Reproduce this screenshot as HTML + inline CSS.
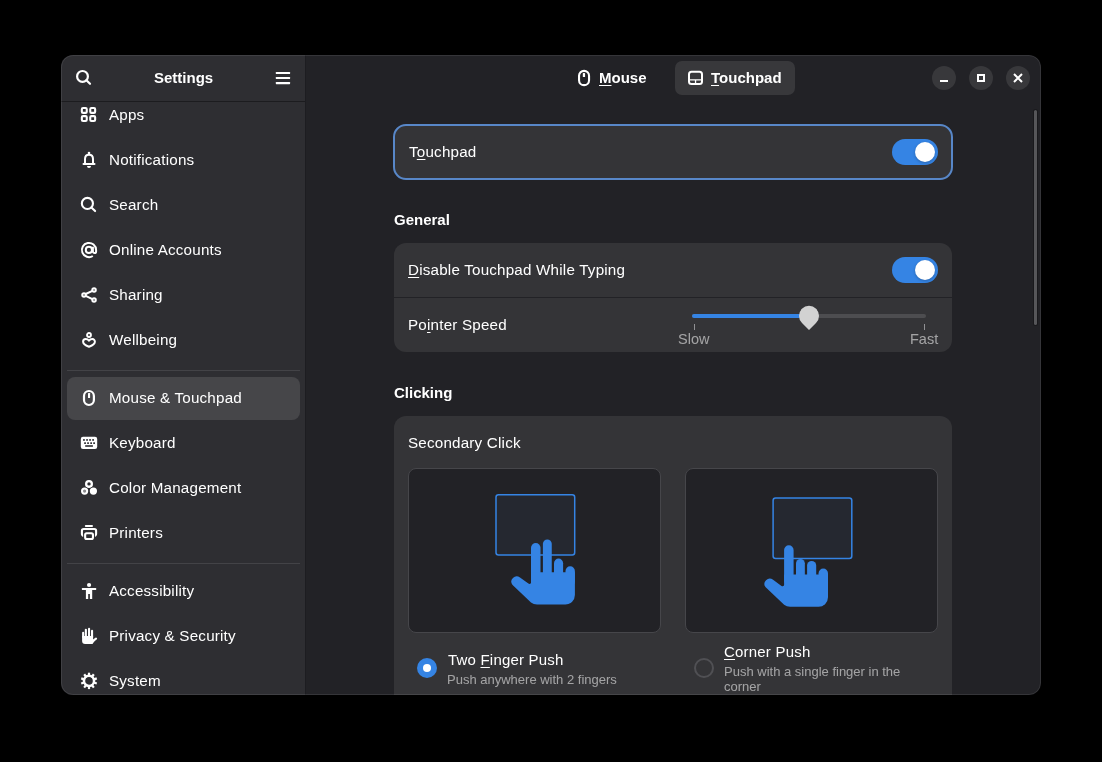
<!DOCTYPE html>
<html><head><meta charset="utf-8">
<style>
*{margin:0;padding:0;box-sizing:border-box}
html,body{width:1102px;height:762px;background:#000;overflow:hidden;font-family:"Liberation Sans",sans-serif;color:#fff}
.abs{position:absolute}
.t{position:absolute;white-space:nowrap;will-change:transform;letter-spacing:0.2px}
.b{letter-spacing:0}
.dim{letter-spacing:0}
.b{font-weight:bold}
.dim{color:rgba(255,255,255,0.55)}
.u{text-decoration:underline;text-decoration-thickness:1px;text-underline-offset:2px}
.card{position:absolute;background:#343437;border-radius:12px}
svg{position:absolute;overflow:visible}
#win{position:absolute;left:0;top:0;width:1102px;height:762px;background:#222226;clip-path:inset(55px 61px 67px 61px round 12px)}
</style></head>
<body>
<div id="win">
<div class="abs" style="left:61px;top:55px;width:244px;height:640px;background:#2e2e32"></div>
<div class="abs" style="left:305px;top:55px;width:1px;height:640px;background:#1d1d21"></div>
<div class="abs" style="left:61px;top:101px;width:244px;height:1px;background:#1c1c1f"></div>
<div class="abs" style="left:67px;top:377px;width:233px;height:43px;border-radius:8px;background:#464649"></div>
<div class="abs" style="left:67px;top:370px;width:233px;height:1px;background:#434347"></div>
<div class="abs" style="left:67px;top:563px;width:233px;height:1px;background:#434347"></div>
<div class="t " style="left:109px;top:104.73px;font-size:15.2px;line-height:20px;letter-spacing:0.2px">Apps</div>
<div class="t " style="left:109px;top:149.73px;font-size:15.2px;line-height:20px;letter-spacing:0.2px">Notifications</div>
<div class="t " style="left:109px;top:194.73px;font-size:15.2px;line-height:20px;letter-spacing:0.2px">Search</div>
<div class="t " style="left:109px;top:239.73px;font-size:15.2px;line-height:20px;letter-spacing:0.2px">Online Accounts</div>
<div class="t " style="left:109px;top:284.73px;font-size:15.2px;line-height:20px;letter-spacing:0.2px">Sharing</div>
<div class="t " style="left:109px;top:329.73px;font-size:15.2px;line-height:20px;letter-spacing:0.2px">Wellbeing</div>
<div class="t " style="left:109px;top:388.03px;font-size:15.2px;line-height:20px;letter-spacing:0.2px">Mouse &amp; Touchpad</div>
<div class="t " style="left:109px;top:433.03px;font-size:15.2px;line-height:20px;letter-spacing:0.2px">Keyboard</div>
<div class="t " style="left:109px;top:478.03px;font-size:15.2px;line-height:20px;letter-spacing:0.2px">Color Management</div>
<div class="t " style="left:109px;top:523.03px;font-size:15.2px;line-height:20px;letter-spacing:0.2px">Printers</div>
<div class="t " style="left:109px;top:581.03px;font-size:15.2px;line-height:20px;letter-spacing:0.2px">Accessibility</div>
<div class="t " style="left:109px;top:626.23px;font-size:15.2px;line-height:20px;letter-spacing:0.2px">Privacy &amp; Security</div>
<div class="t " style="left:109px;top:671.33px;font-size:15.2px;line-height:20px;letter-spacing:0.2px">System</div>
<div class="t b" style="left:153.5px;top:67.60px;font-size:15px;line-height:20px;">Settings</div>
<div class="abs" style="left:675px;top:61px;width:120px;height:34px;border-radius:7px;background:#38383b"></div>
<div class="t b" style="left:598.5px;top:68.10px;font-size:15px;line-height:20px;"><span class="u">M</span>ouse</div>
<div class="t b" style="left:710.5px;top:68.10px;font-size:15px;line-height:20px;"><span class="u">T</span>ouchpad</div>
<div class="abs" style="left:932px;top:66px;width:24px;height:24px;border-radius:12px;background:#38383b"></div>
<div class="abs" style="left:969px;top:66px;width:24px;height:24px;border-radius:12px;background:#38383b"></div>
<div class="abs" style="left:1006px;top:66px;width:24px;height:24px;border-radius:12px;background:#38383b"></div>
<div class="abs" style="left:1034px;top:110px;width:3px;height:215px;border-radius:2px;background:#565659;box-shadow:0 0 0 1px rgba(0,0,0,0.25)"></div>
<div class="card" style="left:394px;top:125px;width:558px;height:54px;"></div>
<div class="abs" style="left:393px;top:124px;width:560px;height:56px;border-radius:13px;border:2px solid #5887c8"></div>
<div class="t " style="left:409px;top:141.73px;font-size:15.2px;line-height:20px;">T<span class="u">o</span>uchpad</div>
<div class="abs" style="left:892px;top:139px;width:46px;height:26px;border-radius:13px;background:#3584e4"></div>
<div class="abs" style="left:915px;top:142px;width:20px;height:20px;border-radius:10px;background:#fff;box-shadow:0 1px 3px rgba(0,0,0,0.25)"></div>
<div class="t b" style="left:394.4px;top:209.60px;font-size:15px;line-height:20px;">General</div>
<div class="card" style="left:394px;top:243px;width:558px;height:109px;"></div>
<div class="abs" style="left:394px;top:297px;width:558px;height:1px;background:#222226"></div>
<div class="t " style="left:408px;top:260.43px;font-size:15.2px;line-height:20px;"><span class="u">D</span>isable Touchpad While Typing</div>
<div class="abs" style="left:892px;top:257px;width:46px;height:26px;border-radius:13px;background:#3584e4"></div>
<div class="abs" style="left:915px;top:260px;width:20px;height:20px;border-radius:10px;background:#fff;box-shadow:0 1px 3px rgba(0,0,0,0.25)"></div>
<div class="t " style="left:408px;top:315.13px;font-size:15.2px;line-height:20px;">Po<span class="u">i</span>nter Speed</div>
<div class="abs" style="left:692px;top:314px;width:234px;height:4px;border-radius:2px;background:#4d4d50"></div>
<div class="abs" style="left:692px;top:314px;width:117px;height:4px;border-radius:2px;background:#3584e4"></div>
<div class="abs" style="left:694px;top:324px;width:1px;height:6px;background:#909093"></div>
<div class="abs" style="left:924px;top:324px;width:1px;height:6px;background:#909093"></div>
<svg style="left:0;top:0" width="1102" height="762"><path d="M809 330 L802 323 A10 10 0 1 1 816 323 Z" fill="#d2d2d2"/></svg>
<div class="t dim" style="left:677.5px;top:328.58px;font-size:14.5px;line-height:20px;">Slow</div>
<div class="t dim" style="left:909.8px;top:328.78px;font-size:14.5px;line-height:20px;">Fast</div>
<div class="t b" style="left:394.4px;top:382.50px;font-size:15px;line-height:20px;">Clicking</div>
<div class="card" style="left:394px;top:416px;width:558px;height:320px;"></div>
<div class="t " style="left:408.4px;top:433.33px;font-size:15.2px;line-height:20px;">Secondary Click</div>
<div class="abs" style="left:408px;top:468px;width:253px;height:165px;border-radius:8px;background:#222226;border:1px solid #46464a"></div>
<div class="abs" style="left:685px;top:468px;width:253px;height:165px;border-radius:8px;background:#222226;border:1px solid #46464a"></div>
<div class="abs" style="left:417px;top:658px;width:20px;height:20px;border-radius:10px;background:#3584e4"></div>
<div class="abs" style="left:423px;top:664px;width:8px;height:8px;border-radius:4px;background:#fff"></div>
<div class="abs" style="left:694px;top:658px;width:20px;height:20px;border-radius:10px;border:2px solid #505054"></div>
<div class="t " style="left:447.9px;top:649.50px;font-size:15.0px;line-height:20px;">Two <span class="u">F</span>inger Push</div>
<div class="t dim" style="left:447px;top:671.50px;font-size:13px;line-height:16px;">Push anywhere with 2 fingers</div>
<div class="t " style="left:723.8px;top:642.10px;font-size:15.0px;line-height:20px;"><span class="u">C</span>orner Push</div>
<div class="t dim" style="left:724px;top:664.40px;font-size:13px;line-height:16px;">Push with a single finger in the</div>
<div class="t dim" style="left:724px;top:678.90px;font-size:13px;line-height:16px;">corner</div>
<svg style="left:80px;top:106px" width="16" height="16" viewBox="0 0 16 16"><g transform="translate(0.50 0.50)"><rect x="1.35" y="1.48" width="4.9" height="4.9" rx="1.2" fill="none" stroke="#fff" stroke-width="2.1"/><rect x="1.35" y="9.65" width="4.9" height="4.9" rx="1.2" fill="none" stroke="#fff" stroke-width="2.1"/><rect x="9.75" y="1.48" width="4.9" height="4.9" rx="1.2" fill="none" stroke="#fff" stroke-width="2.1"/><rect x="9.75" y="9.65" width="4.9" height="4.9" rx="1.2" fill="none" stroke="#fff" stroke-width="2.1"/></g></svg>
<svg style="left:80px;top:151px" width="16" height="16" viewBox="0 0 16 16"><g transform="translate(0.50 0.50)"><circle cx="8.5" cy="1.6" r="1.3" fill="#fff"/><path d="M4.5 11.6 V7.6 C4.5 5 6.2 3.2 8.5 3.2 C10.8 3.2 12.5 5 12.5 7.6 V11.6" fill="none" stroke="#fff" stroke-width="2"/><rect x="2" y="11.4" width="13" height="2.1" rx="1" fill="#fff"/><path d="M6.5 14.6 H10.5 A2 2 0 0 1 6.5 14.6 Z" fill="#fff"/></g></svg>
<svg style="left:80px;top:196px" width="16" height="16" viewBox="0 0 16 16"><g transform="translate(0.50 0.50)"><circle cx="6.9" cy="6.95" r="5.55" fill="none" stroke="#fff" stroke-width="2.1"/><path d="M10.9 10.9 L14.6 14.6" fill="none" stroke="#fff" stroke-width="2.1" stroke-linecap="round"/></g></svg>
<svg style="left:80px;top:241px" width="16" height="16" viewBox="0 0 16 16"><g transform="translate(0.50 0.50)"><path d="M12.3 14.5 A7.1 7.1 0 1 1 15.6 8.5 V9.9 A1.6 1.6 0 0 1 12.4 9.9 V5.2" fill="none" stroke="#fff" stroke-width="2"/><circle cx="8.4" cy="8.4" r="3.1" fill="none" stroke="#fff" stroke-width="2"/></g></svg>
<svg style="left:80px;top:286px" width="16" height="16" viewBox="0 0 16 16"><g transform="translate(0.50 0.50)"><circle cx="3.5" cy="8.4" r="1.75" fill="none" stroke="#fff" stroke-width="2"/><circle cx="13.55" cy="3.5" r="1.75" fill="none" stroke="#fff" stroke-width="2"/><circle cx="13.55" cy="13.5" r="1.75" fill="none" stroke="#fff" stroke-width="2"/><path d="M5.2 7.5 L11.9 4.4 M5.2 9.3 L11.9 12.6" fill="none" stroke="#fff" stroke-width="2"/></g></svg>
<svg style="left:80px;top:331px" width="16" height="16" viewBox="0 0 16 16"><g transform="translate(0.50 0.50)"><circle cx="8.5" cy="3.5" r="1.95" fill="none" stroke="#fff" stroke-width="1.9"/><path d="M8.5 9.3 C7.6 8 6.4 7.6 5.2 7.6 C3.6 7.6 2.6 8.9 2.6 10.3 C2.6 12.6 5.5 14.2 8.5 15.3 C11.5 14.2 14.4 12.6 14.4 10.3 C14.4 8.9 13.4 7.6 11.8 7.6 C10.6 7.6 9.4 8 8.5 9.3 Z" fill="none" stroke="#fff" stroke-width="2" stroke-linejoin="round"/></g></svg>
<svg style="left:80px;top:389px" width="16" height="16" viewBox="0 0 16 16"><g transform="translate(0.50 0.80)"><rect x="3.5" y="1.2" width="9.9" height="14" rx="4.9" fill="none" stroke="#fff" stroke-width="2.2"/><rect x="7.5" y="3.1" width="2.1" height="5.2" rx="0.5" fill="#fff"/></g></svg>
<svg style="left:80px;top:434px" width="16" height="16" viewBox="0 0 16 16"><g transform="translate(0.50 0.80)"><rect x="0.3" y="2" width="16.4" height="12.2" rx="2.2" fill="#fff"/><rect x="2.6" y="4.3" width="1.7" height="1.7" fill="#2e2e32"/><rect x="5.7" y="4.3" width="1.7" height="1.7" fill="#2e2e32"/><rect x="8.7" y="4.3" width="1.7" height="1.7" fill="#2e2e32"/><rect x="11.75" y="4.3" width="1.7" height="1.7" fill="#2e2e32"/><rect x="3.7" y="7.5" width="1.7" height="1.7" fill="#2e2e32"/><rect x="6.7" y="7.5" width="1.7" height="1.7" fill="#2e2e32"/><rect x="9.8" y="7.5" width="1.7" height="1.7" fill="#2e2e32"/><rect x="12.75" y="7.5" width="1.7" height="1.7" fill="#2e2e32"/><rect x="4.7" y="10.4" width="7.7" height="1.6" fill="#2e2e32"/></g></svg>
<svg style="left:80px;top:479px" width="16" height="16" viewBox="0 0 16 16"><g transform="translate(0.50 0.80)"><circle cx="12.9" cy="11.3" r="4.4" fill="#2e2e32"/><circle cx="4.1" cy="11.3" r="4.4" fill="#2e2e32"/><circle cx="8.5" cy="4.1" r="4.8" fill="#2e2e32"/><circle cx="8.5" cy="4.1" r="2.85" fill="none" stroke="#fff" stroke-width="2.3"/><circle cx="12.9" cy="11.3" r="4.4" fill="#2e2e32"/><circle cx="12.9" cy="11.3" r="3.6" fill="#fff"/><circle cx="4.1" cy="11.3" r="4.3" fill="#2e2e32"/><circle cx="4.1" cy="11.3" r="2.6" fill="#8a8a8d" stroke="#fff" stroke-width="2"/></g></svg>
<svg style="left:80px;top:524px" width="16" height="16" viewBox="0 0 16 16"><g transform="translate(0.50 0.80)"><rect x="4.3" y="0.1" width="8.2" height="2.1" rx="1" fill="#fff"/><path d="M3.6 11 H3.2 A1.8 1.8 0 0 1 1.4 9.2 V6 A1.8 1.8 0 0 1 3.2 4.2 H13.8 A1.8 1.8 0 0 1 15.6 6 V9.2 A1.8 1.8 0 0 1 13.8 11 H13.4" fill="none" stroke="#fff" stroke-width="2.1"/><rect x="4.65" y="8.45" width="7.8" height="5.8" rx="1.5" fill="none" stroke="#2e2e32" stroke-width="4"/><rect x="4.65" y="8.45" width="7.8" height="5.8" rx="1.5" fill="none" stroke="#fff" stroke-width="2.1"/></g></svg>
<svg style="left:80px;top:582px" width="16" height="16" viewBox="0 0 16 16"><g transform="translate(0.50 0.80)"><circle cx="8.55" cy="2.2" r="2.1" fill="#fff"/><rect x="1.4" y="5.2" width="14.3" height="2.1" rx="0.5" fill="#fff"/><path d="M5.4 7 H11.7 V16.3 H9.4 V11.3 H7.7 V16.3 H5.4 Z" fill="#fff"/></g></svg>
<svg style="left:80px;top:628px" width="16" height="16" viewBox="0 0 16 16"><g transform="translate(0.50 0.00)"><rect x="1.6" y="3.7" width="2.1" height="6.3" rx="1.05" fill="#fff"/><rect x="4.3" y="0.8" width="2.1" height="9.2" rx="1.05" fill="#fff"/><rect x="7.5" y="-0.3" width="2.1" height="10.3" rx="1.05" fill="#fff"/><rect x="10.5" y="1.8" width="2.1" height="8.2" rx="1.05" fill="#fff"/><path d="M1.6 8 H12.6 V12 L15.6 10.7 L12 15.9 H4.6 A3 3 0 0 1 1.6 12.9 Z" fill="#fff"/><path d="M11 14.2 L15.5 10.7" fill="none" stroke="#fff" stroke-width="2.2" stroke-linecap="round"/></g></svg>
<svg style="left:80px;top:673px" width="16" height="16" viewBox="0 0 16 16"><g transform="translate(0.50 0.10)"><rect x="7.4" y="-0.4" width="2.2" height="4" transform="rotate(0 8.5 7.8)" fill="#fff"/><rect x="7.4" y="-0.4" width="2.2" height="4" transform="rotate(-36 8.5 7.8)" fill="#fff"/><rect x="7.4" y="-0.4" width="2.2" height="4" transform="rotate(-72 8.5 7.8)" fill="#fff"/><rect x="7.4" y="-0.4" width="2.2" height="4" transform="rotate(-108 8.5 7.8)" fill="#fff"/><rect x="7.4" y="-0.4" width="2.2" height="4" transform="rotate(-144 8.5 7.8)" fill="#fff"/><rect x="7.4" y="-0.4" width="2.2" height="4" transform="rotate(-180 8.5 7.8)" fill="#fff"/><rect x="7.4" y="-0.4" width="2.2" height="4" transform="rotate(-216 8.5 7.8)" fill="#fff"/><rect x="7.4" y="-0.4" width="2.2" height="4" transform="rotate(-252 8.5 7.8)" fill="#fff"/><rect x="7.4" y="-0.4" width="2.2" height="4" transform="rotate(-288 8.5 7.8)" fill="#fff"/><rect x="7.4" y="-0.4" width="2.2" height="4" transform="rotate(-324 8.5 7.8)" fill="#fff"/><circle cx="8.5" cy="7.8" r="5.05" fill="none" stroke="#fff" stroke-width="2.5"/><circle cx="8.5" cy="7.8" r="6.3" fill="none" stroke="#fff" stroke-width="0"/></g></svg>
<svg style="left:75px;top:69px" width="16" height="16" viewBox="0 0 16 16"><g transform="translate(0.00 0.00)"><circle cx="7.5" cy="7.4" r="5.4" fill="none" stroke="#fff" stroke-width="2.2"/><path d="M11.4 11.3 L15 14.8" fill="none" stroke="#fff" stroke-width="2.2" stroke-linecap="round"/></g></svg>
<svg style="left:275px;top:71px" width="15" height="13" viewBox="0 0 15 13"><g transform="translate(0.80 0.90)"><rect x="0" y="0" width="14.3" height="2.2" rx="0.6" fill="#fff"/><rect x="0" y="5" width="14.3" height="2.2" rx="0.6" fill="#fff"/><rect x="0" y="10.1" width="14.3" height="2.2" rx="0.6" fill="#fff"/></g></svg>
<svg style="left:576px;top:70px" width="16" height="16" viewBox="0 0 16 16"><g transform="translate(0.00 0.00)"><rect x="3.05" y="0.85" width="10" height="14.3" rx="5" fill="none" stroke="#fff" stroke-width="2.1"/><rect x="6.8" y="3.1" width="2.3" height="4" rx="0.6" fill="#fff"/></g></svg>
<svg style="left:688px;top:70px" width="16" height="16" viewBox="0 0 16 16"><g transform="translate(0.00 0.00)"><rect x="1" y="1.8" width="13" height="12.3" rx="2.5" fill="none" stroke="#fff" stroke-width="2"/><path d="M1 9.85 H14 M7.55 9.85 V14" fill="none" stroke="#fff" stroke-width="1.3"/></g></svg>
<div class="abs" style="left:940px;top:80px;width:8px;height:2px;background:#fff"></div>
<div class="abs" style="left:977px;top:74px;width:8px;height:8px;border:2px solid #fff"></div>
<svg style="left:1013px;top:73px" width="10" height="10" viewBox="0 0 10 10"><g transform="translate(0.00 0.00)"><path d="M1 1 L9 9 M9 1 L1 9" fill="none" stroke="#fff" stroke-width="2"/></g></svg>
<svg style="left:0;top:0" width="1102" height="762"><rect x="496" y="494.7" width="78.7" height="60.4" rx="2.5" fill="#252830" stroke="#3584e4" stroke-width="1.5"/><g transform="translate(0 0)" fill="#3584e4"><rect x="531" y="543" width="9.5" height="40" rx="4.75"/><rect x="542.9" y="539.4" width="8.85" height="43.60000000000002" rx="4.42"/><rect x="554" y="558.6" width="9.1" height="25" rx="4.55"/><rect x="565.5" y="566.3" width="9.4" height="20" rx="4.7"/><path d="M531 572.2 H574.9 V595 A9.4 9.4 0 0 1 565.5 604.4 H537 Q533.5 604.4 531 602.5 L512.6 585 A5.3 5.3 0 0 1 520 577.5 L528.4 583.6 Q530 584.4 531 583 Z"/></g><rect x="773.1" y="498" width="78.7" height="60.4" rx="2.5" fill="#252830" stroke="#3584e4" stroke-width="1.5"/><g transform="translate(253.1 2.3)" fill="#3584e4"><rect x="531" y="543" width="9.5" height="40" rx="4.75"/><rect x="542.9" y="556.6" width="8.85" height="26.399999999999977" rx="4.42"/><rect x="554" y="558.6" width="9.1" height="25" rx="4.55"/><rect x="565.5" y="566.3" width="9.4" height="20" rx="4.7"/><path d="M531 572.2 H574.9 V595 A9.4 9.4 0 0 1 565.5 604.4 H537 Q533.5 604.4 531 602.5 L512.6 585 A5.3 5.3 0 0 1 520 577.5 L528.4 583.6 Q530 584.4 531 583 Z"/></g></svg>
<div class="abs" style="left:61px;top:55px;width:980px;height:640px;border-radius:12px;border:1px solid rgba(255,255,255,0.09)"></div>
</div>
</body></html>
